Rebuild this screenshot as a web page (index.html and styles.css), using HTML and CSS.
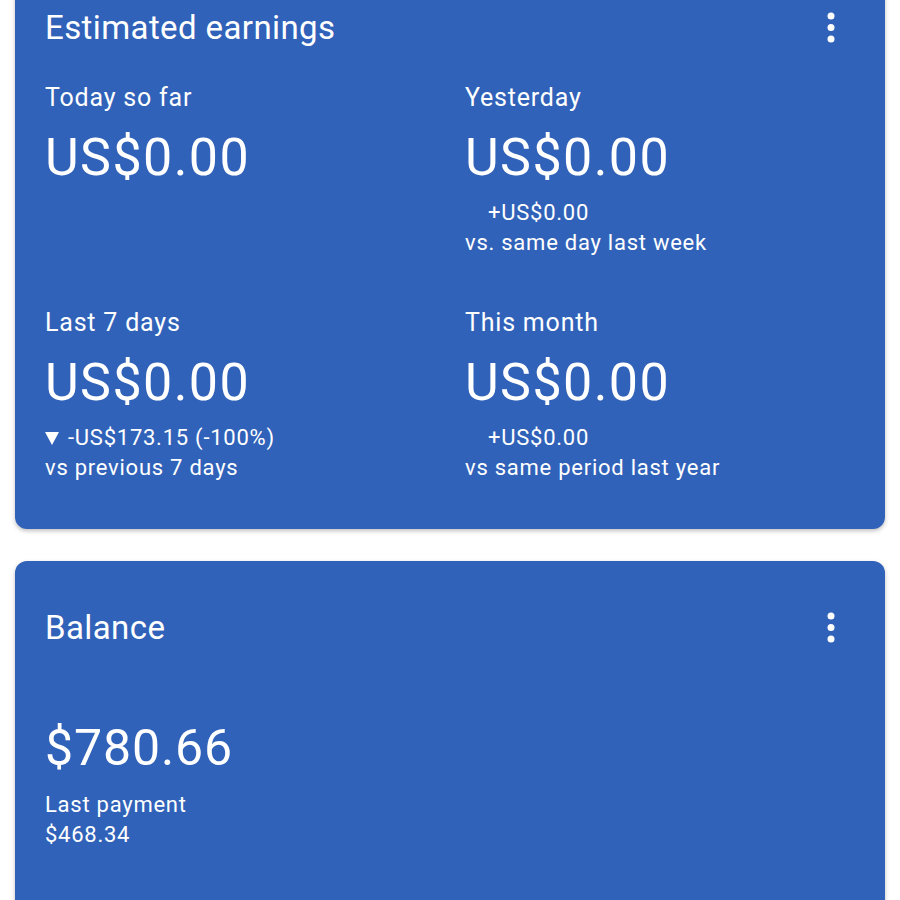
FILE: index.html
```html
<!DOCTYPE html>
<html lang="en">
<head>
  <meta charset="UTF-8" />
  <meta name="viewport" content="width=device-width, initial-scale=1.0"/>
  <title>AdSense - Home</title>
  <link rel="stylesheet" href="styles.css">
</head>
<body>

  <!-- Estimated earnings -->
  <div class="card earnings">
    <div class="card-head">
      <div class="card-title">Estimated earnings</div>
      <div class="more">
        <svg width="8" height="32" viewBox="0 0 8 32">
          <circle cx="4" cy="4" r="3.5" fill="#fff"/>
          <circle cx="4" cy="15.5" r="3.5" fill="#fff"/>
          <circle cx="4" cy="27" r="3.5" fill="#fff"/>
        </svg>
      </div>
    </div>

    <div class="stats">
      <div class="stat">
        <div class="label">Today so far</div>
        <div class="amount">US$0.00</div>
      </div>
      <div class="stat">
        <div class="label">Yesterday</div>
        <div class="amount">US$0.00</div>
        <div class="delta"><span class="arrow"></span>+US$0.00</div>
        <div class="compare">vs. same day last week</div>
      </div>
      <div class="stat second-row">
        <div class="label">Last 7 days</div>
        <div class="amount">US$0.00</div>
        <div class="delta"><span class="arrow"><span class="arrow-down"></span></span>-US$173.15 (-100%)</div>
        <div class="compare">vs previous 7 days</div>
      </div>
      <div class="stat second-row">
        <div class="label">This month</div>
        <div class="amount">US$0.00</div>
        <div class="delta"><span class="arrow"></span>+US$0.00</div>
        <div class="compare">vs same period last year</div>
      </div>
    </div>
  </div>

  <!-- Balance -->
  <div class="card balance">
    <div class="card-head">
      <div class="card-title">Balance</div>
      <div class="more">
        <svg width="8" height="32" viewBox="0 0 8 32">
          <circle cx="4" cy="4" r="3.5" fill="#fff"/>
          <circle cx="4" cy="15.5" r="3.5" fill="#fff"/>
          <circle cx="4" cy="27" r="3.5" fill="#fff"/>
        </svg>
      </div>
    </div>
    <div class="balance-amount">$780.66</div>
    <div class="compare">Last payment</div>
    <div class="compare">$468.34</div>
  </div>

</body>
</html>
```

FILE: styles.css
```css
body {
  margin: 0;
  background-color: #ffffff;
  font-family: Roboto, "Noto Sans", Arial, sans-serif;
  color: #ffffff;
  overflow: hidden;
}

.card {
  background-color: #3162b9;
  border-radius: 12px;
  margin: 0 15px;
  padding: 0 31px 0 30px;
  box-shadow: 0 2px 4px rgba(0, 0, 0, 0.25);
}

.earnings {
  margin-top: -20px;
  padding-top: 28px;
  padding-bottom: 46px;
}

.balance {
  margin-top: 32px;
  padding-top: 47px;
  padding-bottom: 120px;
}

.card-head {
  display: flex;
  justify-content: space-between;
  align-items: center;
  height: 40px;
}

.card-title {
  font-size: 33px;
  line-height: 40px;
  letter-spacing: 0.4px;
}

.more {
  width: 40px;
  height: 40px;
  margin-right: 3px;
  display: flex;
  justify-content: center;
  align-items: center;
}

.more svg {
  display: block;
}

.stats {
  display: grid;
  grid-template-columns: 420px 1fr;
  margin-top: 35px;
}

.second-row {
  margin-top: 50px;
}

.label {
  font-size: 25px;
  line-height: 30px;
  letter-spacing: 0.8px;
}

.amount {
  font-size: 52px;
  line-height: 60px;
  letter-spacing: 1.4px;
  margin-top: 15px;
}

.delta {
  font-size: 22px;
  line-height: 30px;
  letter-spacing: 0.75px;
  margin-top: 10px;
}

.arrow {
  display: inline-block;
  width: 23px;
}

.arrow-down {
  display: inline-block;
  width: 0;
  height: 0;
  border-left: 7px solid transparent;
  border-right: 7px solid transparent;
  border-top: 13px solid #ffffff;
  vertical-align: 0;
}

.compare {
  font-size: 22px;
  line-height: 30px;
  letter-spacing: 0.75px;
}

.balance-amount {
  font-size: 50px;
  line-height: 60px;
  letter-spacing: 0.9px;
  margin-top: 70px;
  margin-bottom: 12px;
}
```
